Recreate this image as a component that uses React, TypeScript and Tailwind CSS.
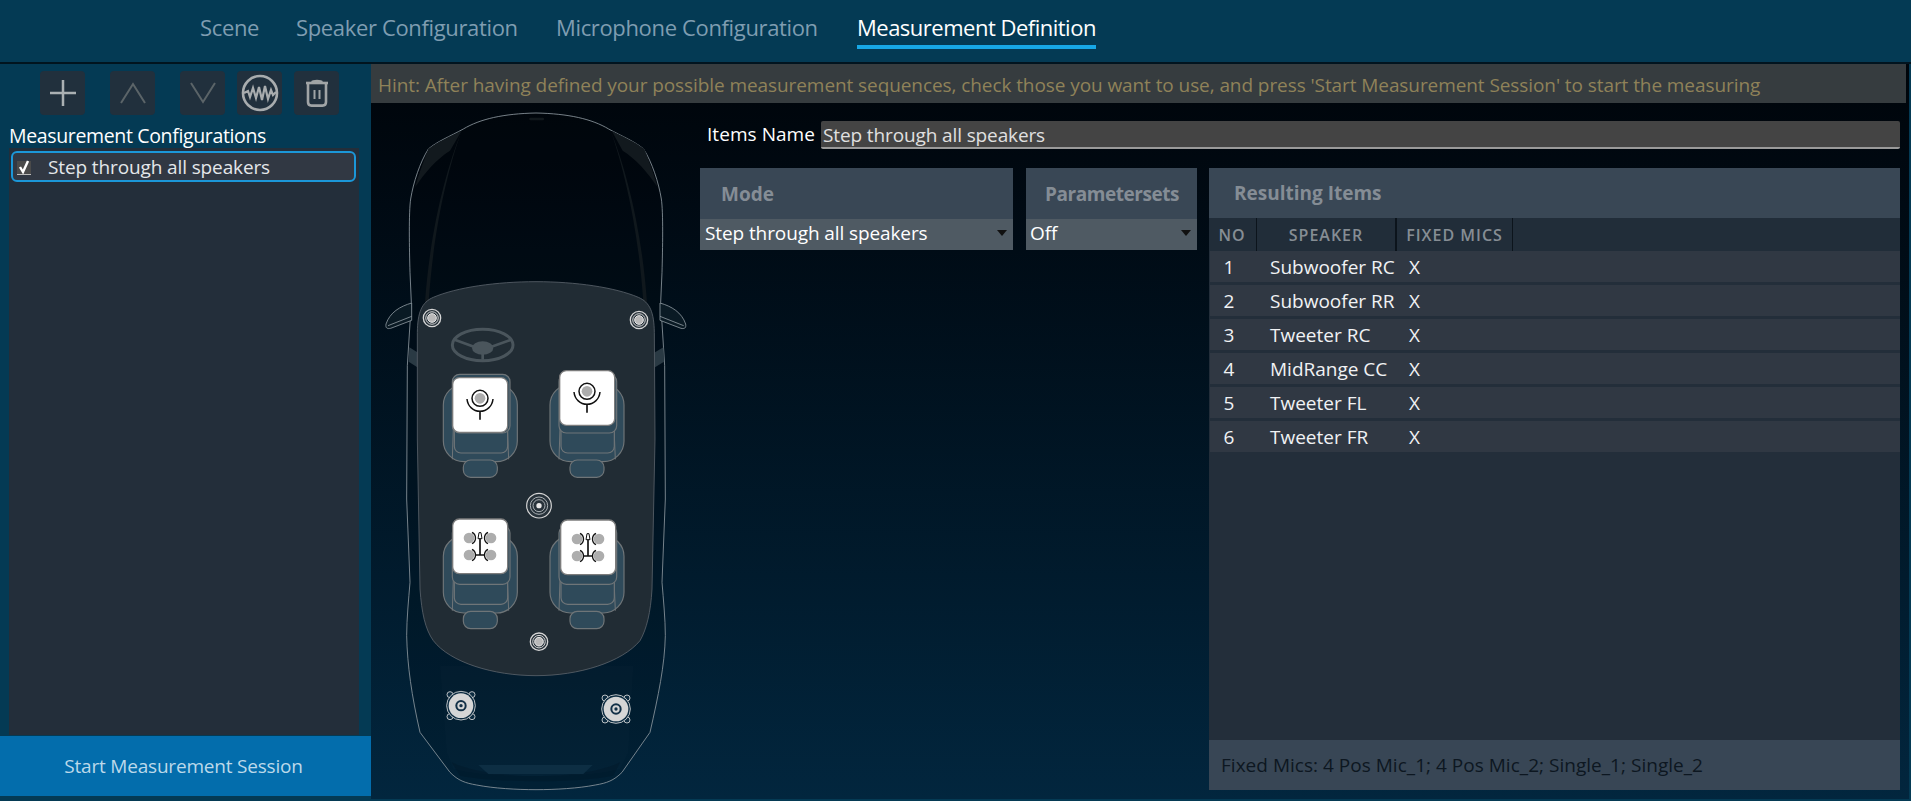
import React from "react";

const F = "[font-family:'Open_Sans','Noto_Sans',sans-serif]";

function Seat({ dx, dy, bx, by }: { dx: number; dy: number; bx: number; by: number }) {
  const s = "#6f7578";
  const fill = "#2f4a5a";
  return (
    <g transform={`translate(${dx} ${dy})`}>
      <rect x={220} y={1310} width={222} height={232} rx={62} fill={fill} stroke={s} strokeWidth={3.5} />
      <path d="M250 1440 L247 1535 M412 1440 L416 1535" stroke={s} strokeWidth={3} fill="none" />
      <rect x={253} y={1430} width={160} height={86} rx={20} fill={fill} stroke={s} strokeWidth={3.5} />
      <rect x={247} y={1280} width={173} height={176} rx={22} fill={fill} stroke={s} strokeWidth={3.5} />
      <rect x={280} y={1537} width={102} height={52} rx={22} fill={fill} stroke={s} strokeWidth={3.5} />
      <rect x={bx} y={by} width={165} height={164} rx={20} fill="#ffffff" stroke="#7c7c7c" strokeWidth={4} />
    </g>
  );
}

function Mic({ x, y }: { x: number; y: number }) {
  return (
    <g transform={`translate(${x} ${y})`} fill="none" stroke="#111" strokeWidth={4.5}>
      <circle r={16} fill="#adadad" stroke="none" />
      <circle r={24} />
      <path d="M-39 2 C-37 24 -20 39 0 39 C20 39 37 24 39 2" />
      <path d="M0 39 V64" strokeWidth={5} />
    </g>
  );
}

function Mic4({ x, y }: { x: number; y: number }) {
  return (
    <g transform={`translate(${x} ${y})`} fill="none" stroke="#111" strokeWidth={4}>
      {[[-33, -26], [33, -26], [-33, 25], [33, 25]].map(([a, b]) => (
        <circle key={`${a}${b}`} cx={a} cy={b} r={16} fill="#adadad" stroke="none" />
      ))}
      <path d="M-24 -43 A19 19 0 0 1 -24 -9 M24 -43 A19 19 0 0 0 24 -9 M-24 8 A19 19 0 0 1 -24 42 M24 8 A19 19 0 0 0 24 42" />
      <path d="M0 -24 V25 M-14 25 H14" strokeWidth={5} />
      <path d="M-6 -24 L-3 -42 H3 L6 -24 Z" strokeWidth={3} />
    </g>
  );
}

function Tweeter({ x, y, r }: { x: number; y: number; r: number }) {
  return (
    <g transform={`translate(${x} ${y})`} fill="none">
      <circle r={r} fill="#27323a" stroke="#d6d6d6" strokeWidth={4} />
      <circle r={r * 0.72} stroke="#d6d6d6" strokeWidth={3} />
      <circle r={r * 0.5} fill="#b9b9b9" stroke="#e8e8e8" strokeWidth={3} />
    </g>
  );
}

function Woofer({ x, y }: { x: number; y: number }) {
  return (
    <g transform={`translate(${x} ${y})`} fill="none" stroke="#dcdcdc" strokeWidth={2.5}>
      {[[-33, -33], [33, -33], [-33, 33], [33, 33]].map(([a, b]) => (
        <circle key={`${a}${b}`} cx={a} cy={b} r={9} fill="#0c2b40" />
      ))}
      <circle r={43} fill="#0c2b40" />
      <circle r={37} fill="#d6d6d6" stroke="none" />
      <circle r={17} fill="#123047" stroke="none" />
      <circle r={11} fill="#d6d6d6" stroke="none" />
      <circle r={5} fill="#123047" stroke="none" />
    </g>
  );
}

function Car() {
  const line = "#8d989f";
  const outline =
    "M498 42 C400 44 330 60 280 90 C240 112 200 128 175 150 C150 190 130 250 122 300 C116 340 118 450 120 520 L124 610 L112 800 L110 1200 L120 1450 C116 1500 110 1560 110 1610 C112 1700 125 1790 150 1900 L240 2020 C265 2045 285 2052 320 2058 C370 2068 440 2072 498 2072 C556 2072 626 2068 676 2058 C711 2052 731 2045 756 2020 L840 1900 C865 1790 884 1700 886 1610 C886 1560 880 1500 876 1450 L886 1200 L884 800 L872 610 L876 520 C878 450 880 340 874 300 C866 250 846 190 821 150 C796 128 756 112 716 90 C666 60 596 44 498 42 Z";
  return (
    <svg viewBox="3 12 987 2088" className="w-[329px] h-[696px] shrink-0">
      <path d={outline} fill="#00000022" stroke={line} strokeWidth={2.5} />
      <path d="M275 95 C225 220 180 400 165 610 L176 610 C190 400 230 220 275 95 Z" fill="#10181d" />
      <path d="M722 95 C772 220 816 400 831 610 L820 610 C806 400 766 220 722 95 Z" fill="#10181d" />
      <path d="M240 155 C200 180 165 220 135 265 C150 215 165 175 175 150 C200 130 235 115 275 95 Z" fill="#12191e" />
      <path d="M758 155 C798 180 833 220 863 265 C848 215 833 175 823 150 C798 130 763 115 725 95 Z" fill="#12191e" />
      <rect x={478} y={56} width={44} height={8} rx={3} fill="#11181c" />
      <path d="M118 745 L142 760 V805 L116 788 Z M880 745 L855 760 V805 L882 788 Z" fill="#2a3a44" />
      <path d="M125 612 C90 622 60 640 48 675 C46 688 52 690 62 688 L125 664 Z M125 652 L54 680" fill="#0a1a24" stroke={line} strokeWidth={2.5} />
      <path d="M870 612 C905 622 935 640 947 675 C949 688 943 690 933 688 L870 664 Z M870 652 L941 680" fill="#0a1a24" stroke={line} strokeWidth={2.5} />
      <path d="M210 1700 L230 1960 L250 2010 C350 2040 650 2040 750 2010 L775 1960 L790 1700 Z" fill="#ffffff03" />
      <path d="M245 1990 C360 2045 640 2045 750 1990 L730 2030 C620 2052 380 2052 270 2030 Z" fill="#00152555" />
      <path d="M325 1998 H668 L640 2025 H355 Z" fill="#0d2e43" />
      <path
        d="M498 548 C380 548 260 565 190 595 C155 610 143 640 142 700 L142 1020 L150 1470 C155 1540 165 1590 190 1625 C240 1690 370 1730 498 1730 C626 1730 756 1690 810 1625 C830 1590 842 1540 846 1470 L855 1020 L853 700 C852 640 840 610 805 595 C735 565 616 548 498 548 Z"
        fill="#212c34"
        stroke="#59626a"
        strokeWidth={2.5}
      />
      <g fill="none" stroke="#4a555c">
        <ellipse cx={338} cy={738} rx={91} ry={47} strokeWidth={9} />
        <path d="M254 722 L320 746 M424 722 L356 746 M338 760 V782" strokeWidth={8} />
        <ellipse cx={338} cy={747} rx={32} ry={20} fill="#4a555c" stroke="none" />
      </g>
      <Seat dx={0} dy={-454} bx={248} by={1290} />
      <Seat dx={320} dy={-454} bx={249} by={1269} />
      <Seat dx={0} dy={0} bx={248} by={1260} />
      <Seat dx={320} dy={0} bx={252} by={1263} />
      <Mic x={330} y={898} />
      <Mic x={651} y={877} />
      <Mic4 x={330} y={1343} />
      <Mic4 x={654} y={1346} />
      <Tweeter x={186} y={657} r={26} />
      <Tweeter x={807} y={663} r={26} />
      <g fill="none">
        <circle cx={507} cy={1220} r={37} fill="#27323a" stroke="#d6d6d6" strokeWidth={3.5} />
        <circle cx={507} cy={1220} r={26} stroke="#aab0b4" strokeWidth={3} />
        <circle cx={507} cy={1220} r={18} stroke="#aab0b4" strokeWidth={3} />
        <circle cx={507} cy={1220} r={8} fill="#e8e8e8" />
      </g>
      <Tweeter x={507} y={1628} r={26} />
      <Woofer x={273} y={1820} />
      <Woofer x={738} y={1830} />
    </svg>
  );
}

function ToolBtn({ children }: { children: React.ReactNode }) {
  return (
    <div className="w-[45px] h-[44px] rounded-[4px] bg-[#21303d] flex items-center justify-center">
      {children}
    </div>
  );
}

function Toolbar() {
  return (
    <div className="h-[44px] mt-[7px] flex pl-[40px]">
      <ToolBtn>
        <svg width="28" height="28" viewBox="0 0 28 28" fill="none" stroke="#aab0b3" strokeWidth="2.5">
          <path d="M14 1 V27 M1 14 H27" />
        </svg>
      </ToolBtn>
      <div className="w-[25px]" />
      <ToolBtn>
        <svg width="30" height="24" viewBox="0 0 30 24" fill="none" stroke="#5b6468" strokeWidth="2">
          <path d="M3 22 L15 3 L27 22" />
        </svg>
      </ToolBtn>
      <div className="w-[25px]" />
      <ToolBtn>
        <svg width="30" height="24" viewBox="0 0 30 24" fill="none" stroke="#5b6468" strokeWidth="2">
          <path d="M3 2 L15 21 L27 2" />
        </svg>
      </ToolBtn>
      <div className="w-[12px]" />
      <ToolBtn>
        <svg width="40" height="40" viewBox="0 0 40 40" fill="none" stroke="#a8acae">
          <circle cx="20" cy="20" r="17" strokeWidth="2.6" />
          <path d="M4 20 L8 18 L10 24 L13 15 L16 25 L19 14 L22 27 L25 13 L28 26 L31 17 L33 22 L36 19" strokeWidth="2.2" />
        </svg>
      </ToolBtn>
      <div className="w-[12px]" />
      <ToolBtn>
        <svg width="24" height="28" viewBox="0 0 24 28" fill="none" stroke="#a0a4a6" strokeWidth="2.6">
          <path d="M1 4 H23" />
          <path d="M7 3 C8 1.6 16 1.6 17 3" />
          <path d="M3 5 V23 C3 25.5 4.5 26.6 6.5 26.6 H17.5 C19.5 26.6 21 25.5 21 23 V5" />
          <path d="M9.5 11 V20 M14.5 11 V20" strokeWidth="2" />
        </svg>
      </ToolBtn>
    </div>
  );
}

function Panel({ title, value, className, px, vx }: { title: string; value: string; className: string; px: string; vx: string }) {
  return (
    <div className={className}>
      <div className={`h-[51px] bg-[#394755] flex items-center pt-[1px] ${px} text-[19px] font-bold text-[#858d95]`}>{title}</div>
      <div className={`h-[31px] bg-[#4f5a63] flex items-center justify-between ${vx} pr-[6px] pb-[3px] text-[19px] text-white tracking-[-0.1px]`}>
        <span>{value}</span>
        <span className="w-0 h-0 border-x-[5.5px] border-x-transparent border-t-[6px] border-t-[#111]" />
      </div>
    </div>
  );
}

const rows = [
  ["1", "Subwoofer RC"],
  ["2", "Subwoofer RR"],
  ["3", "Tweeter RC"],
  ["4", "MidRange CC"],
  ["5", "Tweeter FL"],
  ["6", "Tweeter FR"],
];

export default function App() {
  return (
    <div className={`w-[1911px] h-[801px] overflow-hidden bg-[#043a54] flex flex-col ${F}`}>
      <div className="h-[62px] shrink-0 flex items-center pl-[200px] pb-[8px] text-[22px] tracking-[-0.35px] text-[#7f9db1]">
        <span className="w-[96px]">Scene</span>
        <span className="w-[260px]">Speaker Configuration</span>
        <span className="w-[301px]">Microphone Configuration</span>
        <span className="relative text-white tracking-[-0.5px]">
          Measurement Definition
          <span className="absolute left-0 right-0 top-[34px] h-[4px] bg-[#17a7e6]" />
        </span>
      </div>
      <div className="h-[2px] shrink-0 bg-[#01141f]" />
      <div className="flex h-[735px] shrink-0">
        <aside className="w-[371px] shrink-0 flex flex-col">
          <Toolbar />
          <div className="pl-[9px] mt-[6px] h-[27px] pt-[1px] text-[19.5px] leading-[27px] text-white tracking-[-0.35px]">Measurement Configurations</div>
          <div className="ml-[9px] w-[350px] h-[587px] bg-[#232e3a] pt-[3px] pl-[2px] pr-[3px]">
            <div className="h-[31px] rounded-[6px] border-2 border-[#1b97d8] bg-[#313843] flex items-center pl-[4px] pt-[2px] text-[19px] text-[#e4e7ea] tracking-[-0.12px]">
              <span className="relative w-[14px] h-[14px] bg-[#4a4a4a] border-b border-[#bbb]">
                <svg className="absolute -top-[1px] left-0" width="14" height="14" viewBox="0 0 14 14" fill="none" stroke="#fff" strokeWidth="2.4">
                  <path d="M3 7 L6 12 L11 1" />
                </svg>
              </span>
              <span className="ml-[17px]">Step through all speakers</span>
            </div>
          </div>
          <div className="h-[60px] w-[371px] mt-[1px] bg-[#036dac] flex items-center justify-center pr-[4px] text-[19px] text-[#bcd9ea] tracking-[-0.2px]">
            Start Measurement Session
          </div>
        </aside>
        <main className="w-[1538px] shrink-0 flex flex-col bg-linear-to-b from-[#00050a] to-[#02263e]">
          <div className="h-[39px] mr-[3px] shrink-0 bg-[#363c3f] pl-[7px] pt-[3px] flex items-center text-[19px] text-[#8f8259] tracking-[-0.08px]">
            Hint: After having defined your possible measurement sequences, check those you want to use, and press 'Start Measurement Session' to start the measuring
          </div>
          <div className="flex flex-1 min-h-0">
            <div className="shrink-0 w-[329px]">
              <Car />
            </div>
            <div className="flex-1 min-w-0 pr-[9px]">
              <div className="h-[18px]" />
              <div className="flex items-center h-[28px] pl-[7px]">
                <span className="w-[114px] pb-[1px] text-[19px] text-white tracking-[0.05px]">Items Name</span>
                <div className="flex-1 h-[28px] bg-[#444444] border-b-2 border-[#9a9a9a] rounded-[2px] pl-[2px] pt-[3px] flex items-center text-[19px] text-[#e0e0e0] tracking-[-0.12px]">
                  Step through all speakers
                </div>
              </div>
              <div className="flex mt-[19px] h-[622px]">
                <Panel title="Mode" value="Step through all speakers" className="w-[313px]" px="pl-[21px]" vx="pl-[5px]" />
                <Panel title="Parametersets" value="Off" className="w-[171px] ml-[13px]" px="pl-[19px] tracking-[-0.45px]" vx="pl-[4px]" />
                <div className="w-[691px] ml-[12px] bg-[#232e3a] flex flex-col">
                  <div className="h-[50px] shrink-0 bg-[#394755] flex items-center pl-[25px] pt-[1px] text-[19px] font-bold text-[#858d95]">
                    Resulting Items
                  </div>
                  <div className="h-[33px] shrink-0 flex text-[16px] font-semibold tracking-[1px] text-[#868d94] bg-[#212d39]">
                    <span className="w-[48px] pr-[1px] border-r-[1.5px] border-[#0c141c] flex items-center justify-center">NO</span>
                    <span className="w-[140px] border-r-[2px] border-[#0c141c] flex items-center justify-center">SPEAKER</span>
                    <span className="w-[116px] border-r-[1.5px] border-[#0c141c] flex items-center justify-center">FIXED MICS</span>
                  </div>
                  <div className="flex-1 min-h-0 flex flex-col gap-[3px] pl-[1px]">
                    {rows.map(([n, s]) => (
                      <div key={n} className="h-[31px] shrink-0 bg-[#303843] flex items-center pt-[2px] text-[19px] text-[#f0f2f4]">
                        <span className="w-[38px] text-center">{n}</span>
                        <span className="w-[139px] pl-[22px] whitespace-nowrap">{s}</span>
                        <span className="pl-[22px]">X</span>
                      </div>
                    ))}
                  </div>
                  <div className="h-[50px] shrink-0 bg-[#384655] flex items-center pl-[12px] text-[19px] text-[#0d1721] tracking-[0.02px]">
                    Fixed Mics: 4 Pos Mic_1; 4 Pos Mic_2; Single_1; Single_2
                  </div>
                </div>
              </div>
            </div>
          </div>
        </main>
        <div className="w-[2px] shrink-0 bg-[#043a54]" />
      </div>
    </div>
  );
}
